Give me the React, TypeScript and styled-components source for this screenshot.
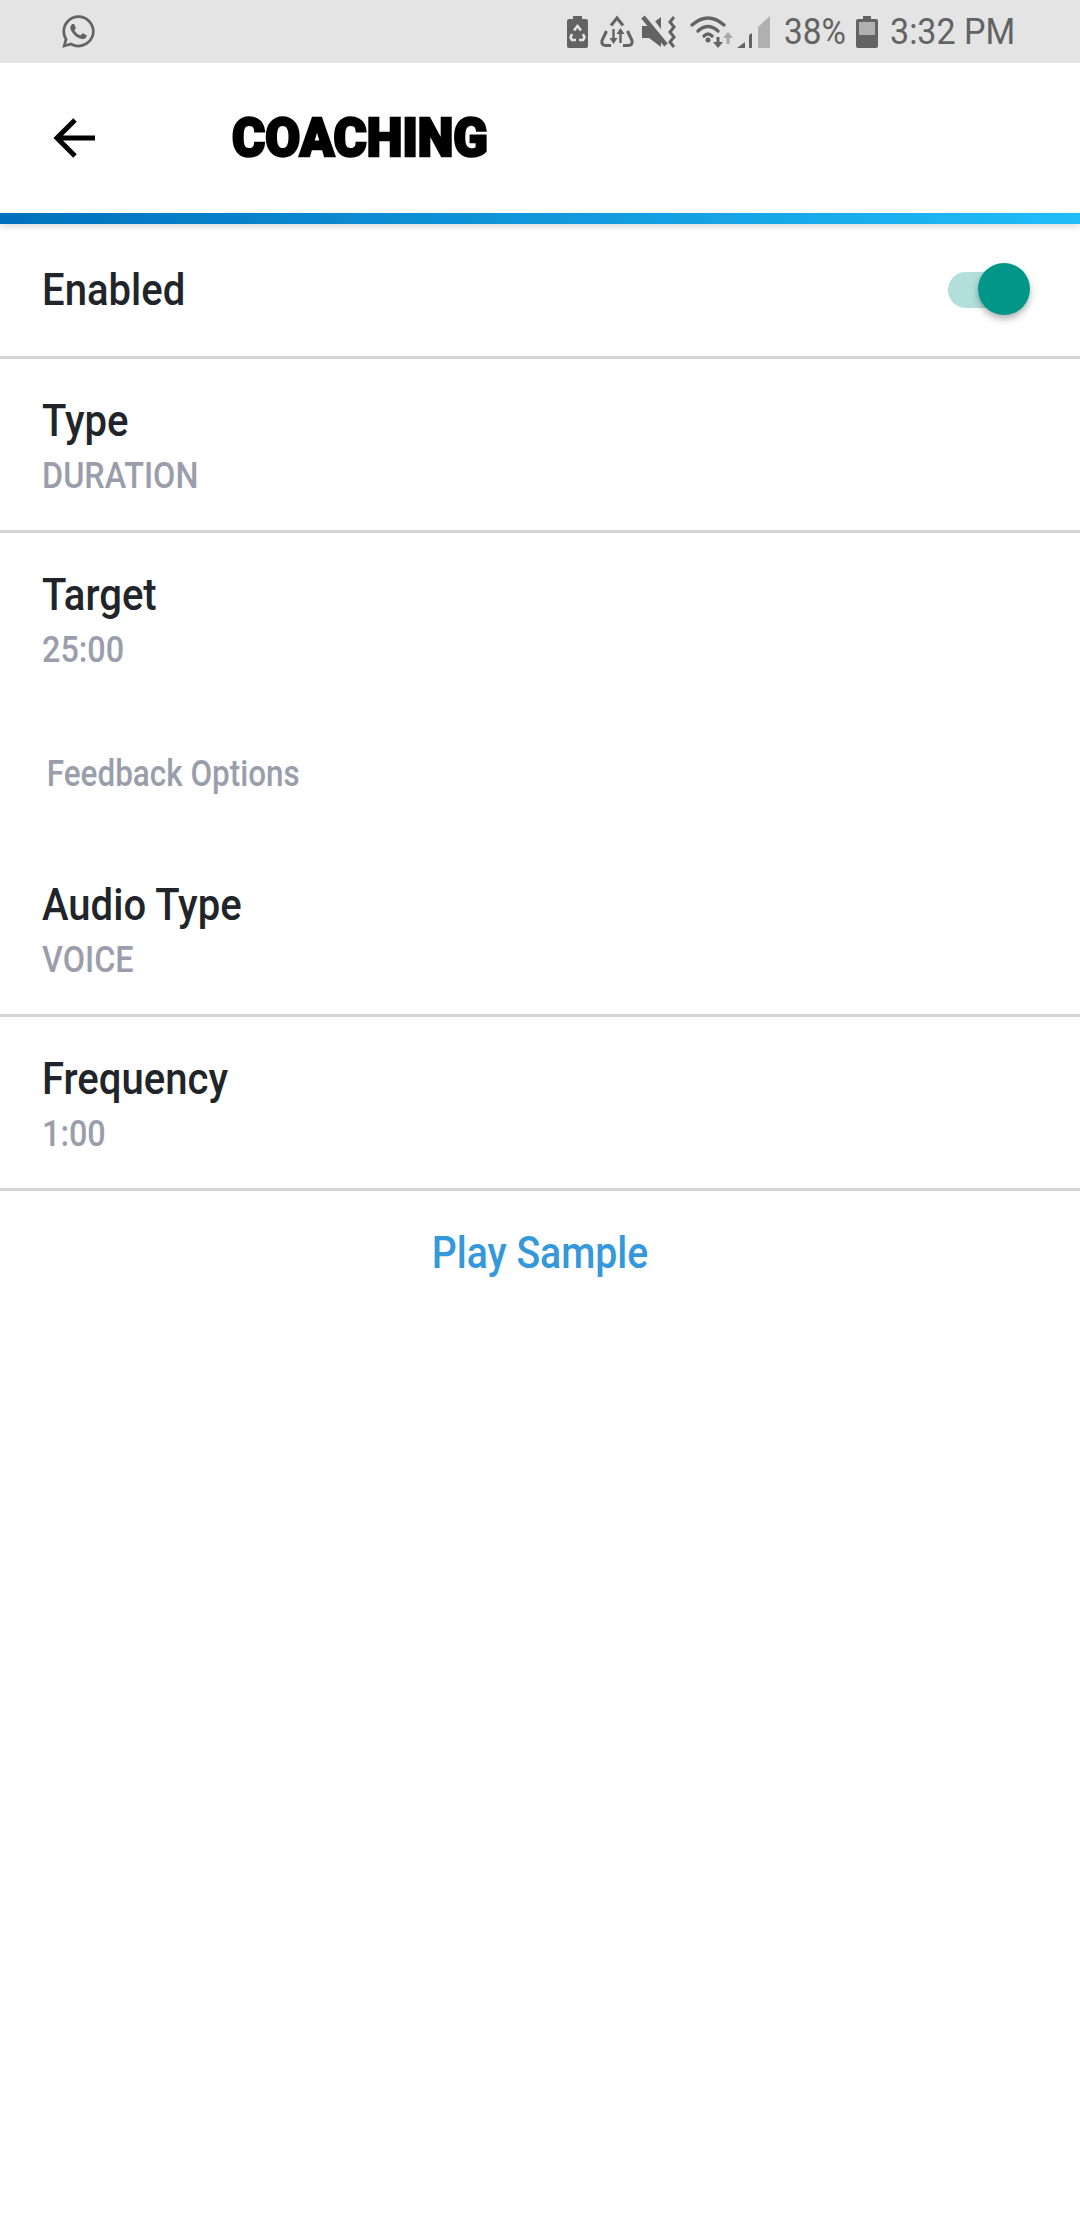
import React from "react";
import styled, { createGlobalStyle } from "styled-components";
import { FaWhatsapp } from "react-icons/fa";

const GlobalStyle = createGlobalStyle`
  html, body {
    margin: 0;
    padding: 0;
    background: #fff;
    font-family: Roboto, "Liberation Sans", sans-serif;
  }
`;

const Screen = styled.div`
  width: 1080px;
  height: 2220px;
  overflow: hidden;
  background: #fff;
`;

const StatusBar = styled.div`
  height: 63px;
  background: #e4e4e4;
  color: #636363;
  display: flex;
  align-items: center;
  justify-content: space-between;
  padding: 0 67px 0 60px;
  box-sizing: border-box;
`;

const StatusRight = styled.div`
  display: flex;
  align-items: center;
`;

const StatusIcon = styled.svg<{ $gap?: number }>`
  display: block;
  fill: #636363;
  overflow: visible;
  margin-right: ${(p) => p.$gap ?? 0}px;
`;

const StatusText = styled.span<{ $width: number; $gap?: number; $scale: number }>`
  display: inline-block;
  width: ${(p) => p.$width}px;
  margin-right: ${(p) => p.$gap ?? 0}px;
  font-size: 37px;
  line-height: 44px;
  font-weight: 400;
  white-space: nowrap;
  transform: scaleX(${(p) => p.$scale});
  transform-origin: left center;
`;

const Header = styled.div`
  height: 150px;
  display: flex;
  align-items: center;
  padding-left: 53px;
`;

const BackIcon = styled.svg`
  width: 42px;
  height: 42px;
  margin-right: 137px;
  fill: none;
  stroke: #000;
  stroke-width: 5;
`;

const Title = styled.h1`
  margin: 0;
  font-size: 53px;
  line-height: 64px;
  font-weight: 900;
  color: #000;
  white-space: nowrap;
  -webkit-text-stroke: 2.5px #000;
  transform: scaleX(0.955);
  transform-origin: left center;
`;

const GradientBar = styled.div`
  height: 11px;
  background: linear-gradient(90deg, #0071bc 0%, #20bdf9 100%);
  box-shadow: 0 3px 6px rgba(0, 0, 0, 0.14);
`;

const Row = styled.div<{ $divider?: boolean }>`
  padding: 36px 42px 32px;
  border-bottom: ${(p) => (p.$divider ? "3px solid #d5d5d5" : "none")};
`;

const ToggleRow = styled.div`
  height: 132px;
  padding: 0 42px;
  display: flex;
  align-items: center;
  justify-content: space-between;
  border-bottom: 3px solid #d5d5d5;
`;

const Label = styled.div`
  font-size: 45px;
  line-height: 52px;
  font-weight: 500;
  color: #212529;
  white-space: nowrap;
  transform: scaleX(0.89);
  transform-origin: left center;
`;

const Value = styled.div`
  margin-top: 7px;
  font-size: 37px;
  line-height: 44px;
  font-weight: 500;
  color: #9a9eab;
  white-space: nowrap;
  transform: scaleX(0.875);
  transform-origin: left center;
`;

const SectionTitle = styled.div`
  height: 139px;
  padding-left: 55px;
  display: flex;
  align-items: center;
  font-size: 37px;
  font-weight: 500;
  color: #9a9eab;
  white-space: nowrap;
  transform: scaleX(0.85);
  transform-origin: left center;
`;

const Toggle = styled.div`
  position: relative;
  width: 72px;
  height: 36px;
  margin-right: 18px;
  border-radius: 18px;
  background: #b2dfdb;
`;

const ToggleKnob = styled.div`
  position: absolute;
  top: -9px;
  right: -10px;
  width: 52px;
  height: 52px;
  border-radius: 50%;
  background: #009688;
  box-shadow: 0 4px 7px rgba(0, 0, 0, 0.3);
`;

const PlaySample = styled.div`
  padding-top: 36px;
  text-align: center;
  font-size: 45px;
  line-height: 52px;
  font-weight: 500;
  color: #3498db;
  transform: scaleX(0.87);
`;

const App: React.FC = () => {
  return (
    <Screen>
      <GlobalStyle />
      <StatusBar>
        <FaWhatsapp size={37} color="#636363" />
        <StatusRight>
          {/* battery saver */}
          <StatusIcon width="21" height="32" viewBox="0 0 21 32" $gap={12}>
            <path d="M6 0h9v3h4a2 2 0 0 1 2 2v25a2 2 0 0 1-2 2H2a2 2 0 0 1-2-2V5a2 2 0 0 1 2-2h4z" />
            <g fill="none" stroke="#e4e4e4" strokeWidth="2.6">
              <path d="M7 14.500l3.500-4.500 3.500 4.500" />
              <path d="M5 18l-1.500 3.500 1.500 2.500h4" />
              <path d="M16 18l1.500 3.500-1.500 2.500h-4" />
            </g>
          </StatusIcon>
          {/* data saver triangle */}
          <StatusIcon width="34" height="32" viewBox="0 0 34 32" $gap={8}>
            <g fill="none" stroke="#636363" strokeWidth="3">
              <path d="M11 9.500L17 2l6 7.500" />
              <path d="M6.500 15L2 24.500Q1 29.500 6 29.500h5" />
              <path d="M27.500 15L32 24.500Q33 29.500 28 29.500h-5" />
              <path d="M13.500 13v11M20.500 27V16" strokeWidth="2.4" />
            </g>
            <path d="M9.500 22h8l-4 6zM16.500 18h8l-4-6z" />
          </StatusIcon>
          {/* muted */}
          <StatusIcon width="36" height="32" viewBox="0 0 36 32" $gap={12}>
            <path d="M0 10h7L19 1v30L7 22H0z" />
            <path d="M4 -2L28 30" fill="none" stroke="#e4e4e4" strokeWidth="6" />
            <path d="M1 1l23 28" fill="none" stroke="#636363" strokeWidth="4.500" />
            <path d="M32 1l-4 5 4 5-4 5 4 5-4 5 4 5" fill="none" stroke="#636363" strokeWidth="3" />
          </StatusIcon>
          {/* wifi with arrows */}
          <StatusIcon width="45" height="32" viewBox="0 0 45 32" $gap={2}>
            <g fill="none" stroke="#636363" strokeWidth="3.400" strokeLinecap="round">
              <path d="M2 9Q18 -5 34 9" />
              <path d="M8 15Q18 6 28 15" />
              <path d="M14 20Q18 16 22 20" />
            </g>
            <circle cx="18" cy="24" r="2.500" />
            <path d="M26.500 21h3v5h3.500L28 32l-5-6h3.500z" />
            <path d="M36.500 28h3v-6H43l-5-6-5 6h3.500z" fill="#a9a9a9" />
          </StatusIcon>
          {/* signal */}
          <StatusIcon width="34" height="32" viewBox="0 0 34 32" $gap={13}>
            <path d="M0 32l8-6v6zM12 32V19l3-2v15z" />
            <path d="M21 32V11L33 0v32z" fill="#b0b0b0" />
          </StatusIcon>
          <StatusText $width={60} $gap={12} $scale={0.9}>38%</StatusText>
          {/* battery */}
          <StatusIcon width="22" height="32" viewBox="0 0 22 32" $gap={12}>
            <path d="M7 0h8v3h5a2 2 0 0 1 2 2v25a2 2 0 0 1-2 2H2a2 2 0 0 1-2-2V5a2 2 0 0 1 2-2h5z" />
            <path d="M3 6h16v13H3z" fill="#b0b0b0" />
          </StatusIcon>
          <StatusText $width={123} $scale={0.92}>3:32 PM</StatusText>
        </StatusRight>
      </StatusBar>

      <Header>
        <BackIcon viewBox="0 0 42 42">
          <path d="M42 21H4M22 3L4 21l18 18" />
        </BackIcon>
        <Title>COACHING</Title>
      </Header>
      <GradientBar />

      <ToggleRow>
        <Label>Enabled</Label>
        <Toggle>
          <ToggleKnob />
        </Toggle>
      </ToggleRow>

      <Row $divider>
        <Label>Type</Label>
        <Value>DURATION</Value>
      </Row>

      <Row>
        <Label>Target</Label>
        <Value>25:00</Value>
      </Row>

      <SectionTitle>Feedback Options</SectionTitle>

      <Row $divider>
        <Label>Audio Type</Label>
        <Value>VOICE</Value>
      </Row>

      <Row $divider>
        <Label>Frequency</Label>
        <Value>1:00</Value>
      </Row>

      <PlaySample>Play Sample</PlaySample>
    </Screen>
  );
};

export default App;
